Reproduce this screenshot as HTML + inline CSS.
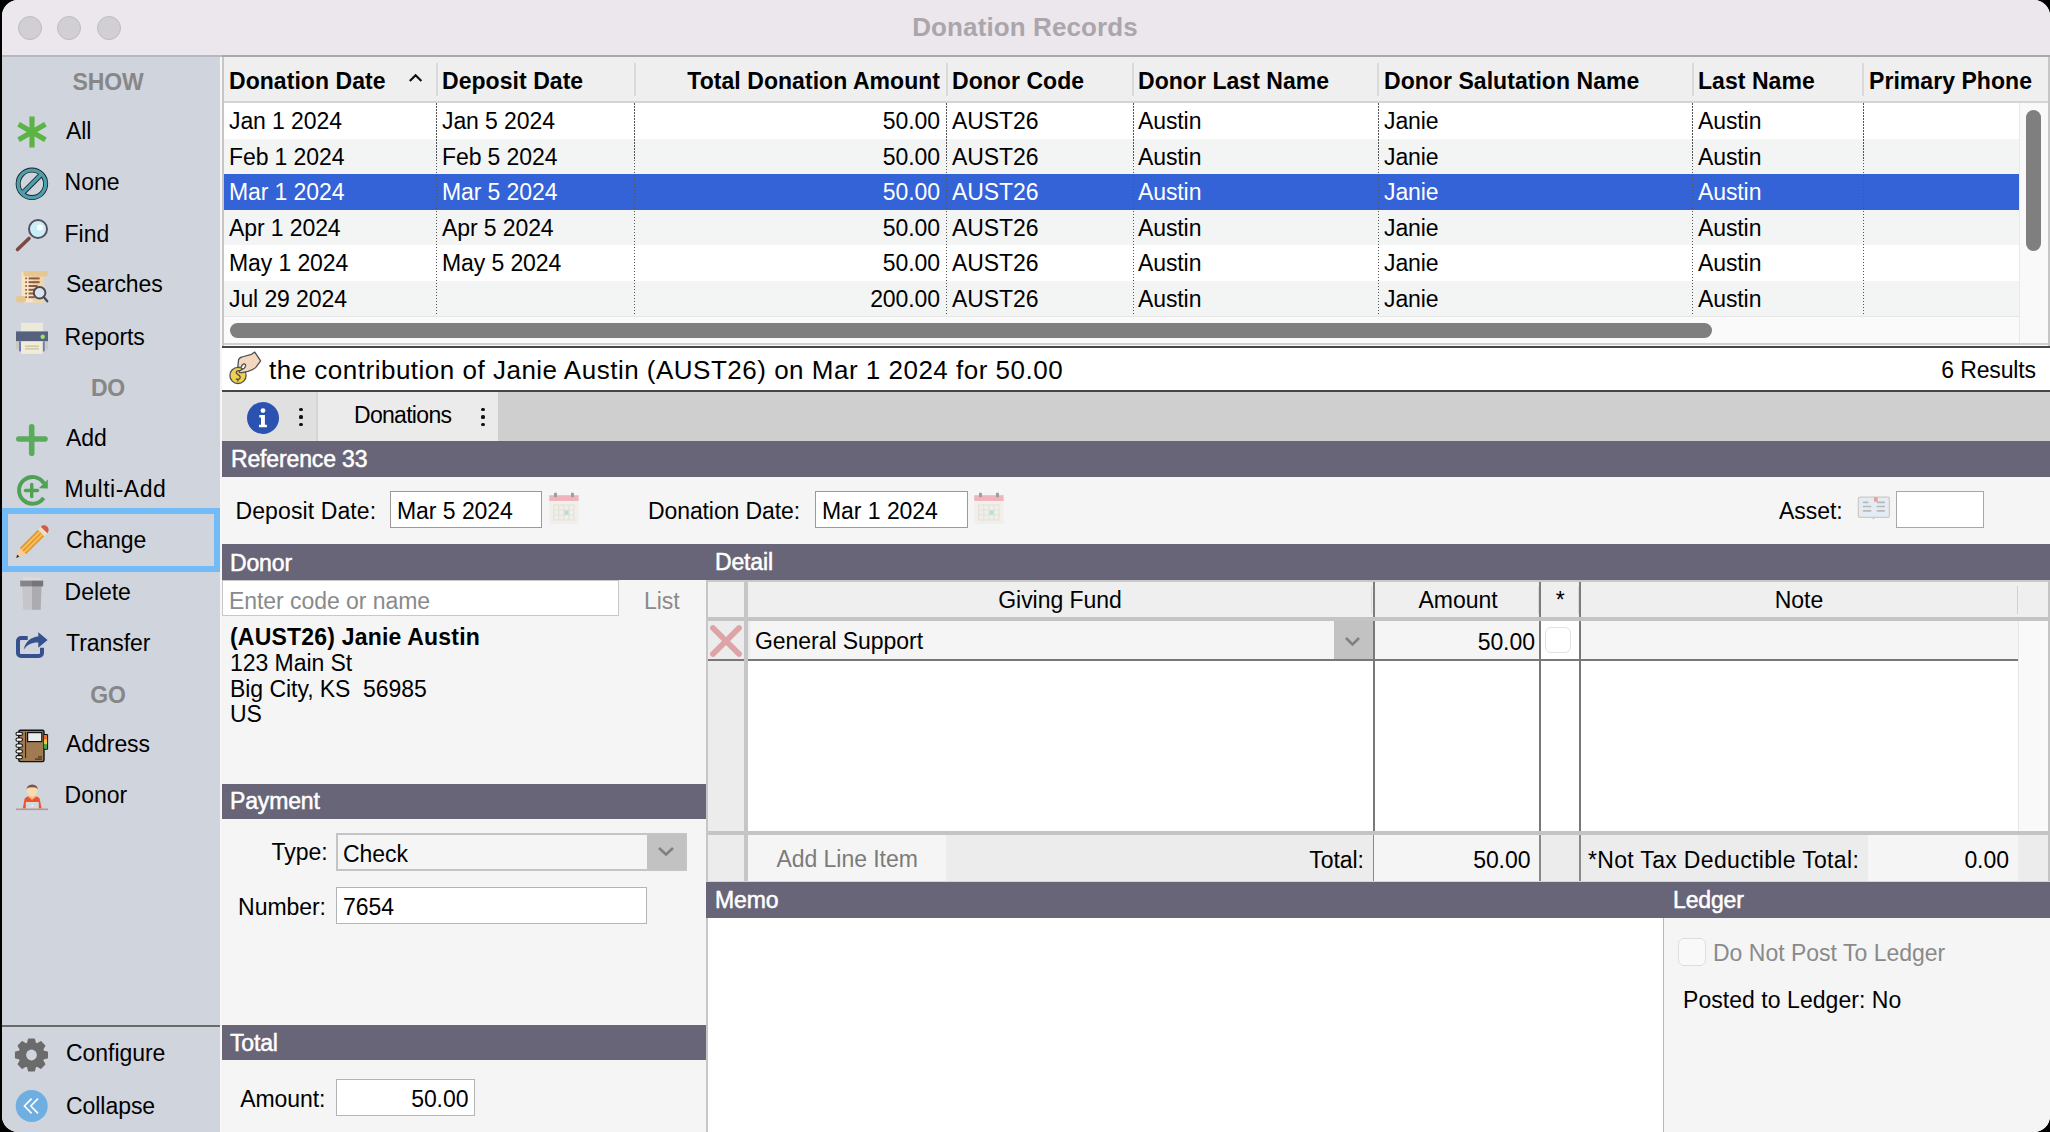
<!DOCTYPE html>
<html><head><meta charset="utf-8"><title>Donation Records</title>
<style>
html,body{margin:0;padding:0;background:#000;}
body{width:2050px;height:1132px;overflow:hidden;position:relative;font-family:"Liberation Sans",sans-serif;}
.a{position:absolute;}
.t{white-space:nowrap;}
#win{left:2px;top:0;width:2048px;height:1132px;border-radius:16px;overflow:hidden;background:#f5f5f5;}
#inner{position:absolute;left:-2px;top:0;width:2050px;height:1132px;}
</style></head><body>
<div class="a" id="win"><div id="inner">
<div class="a" style="left:0px;top:0px;width:2050px;height:55px;background:#ece7ed;"></div>
<div class="a" style="left:0px;top:55px;width:222px;height:2px;background:#b4b8c0;"></div>
<div class="a" style="left:222px;top:55px;width:1828px;height:2px;background:#a9a9a9;"></div>
<div class="a" style="left:18px;top:16px;width:22px;height:22px;border-radius:50%;background:#d2cfd4;border:1px solid #bdbac0;"></div>
<div class="a" style="left:57px;top:16px;width:22px;height:22px;border-radius:50%;background:#d2cfd4;border:1px solid #bdbac0;"></div>
<div class="a" style="left:97px;top:16px;width:22px;height:22px;border-radius:50%;background:#d2cfd4;border:1px solid #bdbac0;"></div>
<div class="a t" style="top:13.99px;font-size:26px;line-height:26px;color:#aaa6ab;letter-spacing:0.1px;font-weight:bold;left:525px;width:1000px;text-align:center;">Donation Records</div>
<div class="a" style="left:0px;top:57px;width:220px;height:1075px;background:#d0d4dd;"></div>
<div class="a" style="left:0px;top:1025px;width:220px;height:2px;background:#6a6a6a;"></div>
<div class="a" style="left:220px;top:57px;width:2px;height:1075px;background:#f7f7f7;"></div>
<div class="a t" style="top:70.53px;font-size:23px;line-height:23px;color:#878787;letter-spacing:-0.15000000000000002px;font-weight:bold;left:-392px;width:1000px;text-align:center;">SHOW</div>
<div class="a t" style="top:377.23px;font-size:23px;line-height:23px;color:#878787;letter-spacing:-0.15000000000000002px;font-weight:bold;left:-392px;width:1000px;text-align:center;">DO</div>
<div class="a t" style="top:683.53px;font-size:23px;line-height:23px;color:#878787;letter-spacing:-0.15000000000000002px;font-weight:bold;left:-392px;width:1000px;text-align:center;">GO</div>
<div class="a t" style="top:119.93px;font-size:23px;line-height:23px;color:#000;letter-spacing:-0.04999999999999999px;left:66px;">All</div>
<div class="a t" style="top:171.03px;font-size:23px;line-height:23px;color:#000;letter-spacing:-0.04999999999999999px;left:64.6px;">None</div>
<div class="a t" style="top:222.53px;font-size:23px;line-height:23px;color:#000;letter-spacing:-0.04999999999999999px;left:64.6px;">Find</div>
<div class="a t" style="top:273.33px;font-size:23px;line-height:23px;color:#000;letter-spacing:-0.04999999999999999px;left:66px;">Searches</div>
<div class="a t" style="top:325.53px;font-size:23px;line-height:23px;color:#000;letter-spacing:-0.04999999999999999px;left:64.6px;">Reports</div>
<div class="a t" style="top:426.73px;font-size:23px;line-height:23px;color:#000;letter-spacing:-0.04999999999999999px;left:66px;">Add</div>
<div class="a t" style="top:477.73px;font-size:23px;line-height:23px;color:#000;letter-spacing:0.49999999999999994px;left:64.6px;">Multi-Add</div>
<div class="a t" style="top:529.33px;font-size:23px;line-height:23px;color:#000;letter-spacing:-0.04999999999999999px;left:66px;">Change</div>
<div class="a t" style="top:581.03px;font-size:23px;line-height:23px;color:#000;letter-spacing:-0.04999999999999999px;left:64.6px;">Delete</div>
<div class="a t" style="top:631.83px;font-size:23px;line-height:23px;color:#000;letter-spacing:-0.04999999999999999px;left:66px;">Transfer</div>
<div class="a t" style="top:733.23px;font-size:23px;line-height:23px;color:#000;letter-spacing:-0.04999999999999999px;left:66px;">Address</div>
<div class="a t" style="top:784.03px;font-size:23px;line-height:23px;color:#000;letter-spacing:-0.04999999999999999px;left:64.6px;">Donor</div>
<div class="a t" style="top:1042.03px;font-size:23px;line-height:23px;color:#000;letter-spacing:-0.04999999999999999px;left:66px;">Configure</div>
<div class="a t" style="top:1094.83px;font-size:23px;line-height:23px;color:#000;letter-spacing:-0.04999999999999999px;left:66px;">Collapse</div>
<svg class="a" style="left:15px;top:115px" width="34" height="34" viewBox="0 0 34 34"><g stroke="#5bb443" stroke-width="5.2" stroke-linecap="butt"><path d="M17 1.5 V32.5"/><path d="M3.6 9.3 L30.4 24.7"/><path d="M3.6 24.7 L30.4 9.3"/></g></svg>
<svg class="a" style="left:15px;top:167px" width="34" height="34" viewBox="0 0 34 34"><circle cx="16.9" cy="16.85" r="13.75" fill="none" stroke="#1b2528" stroke-width="5"/><path d="M8.2 25.55 L25.6 8.15" stroke="#1b2528" stroke-width="5.2"/><circle cx="16.9" cy="16.85" r="13.75" fill="none" stroke="#4d9fae" stroke-width="3.3"/><path d="M7.9 25.85 L25.9 7.85" stroke="#4d9fae" stroke-width="3.5"/></svg>
<svg class="a" style="left:14px;top:216px" width="36" height="38" viewBox="0 0 36 38"><path d="M15 22.5 L3.5 33.5" stroke="#7b4a42" stroke-width="3.6" stroke-linecap="round"/><circle cx="24" cy="13" r="9" fill="#c8eef8" stroke="#57515f" stroke-width="2"/><circle cx="26" cy="11.5" r="3" fill="#fff"/></svg>
<svg class="a" style="left:14px;top:269px" width="36" height="36" viewBox="0 0 36 36"><rect x="7.5" y="2.5" width="22.5" height="31" rx="2" fill="#f9e4c3"/><rect x="18.7" y="2.5" width="11.3" height="31" fill="#f1d5a8"/><rect x="9.3" y="2" width="24.7" height="5.5" rx="2.7" fill="#e8c690"/><rect x="2" y="27" width="10" height="6.5" rx="3" fill="#e8c690"/><g fill="#8a5b45"><rect x="11.2" y="8.6" width="1.8" height="1.6"/><rect x="14.6" y="8.4" width="11" height="2"/><rect x="11.2" y="12.399999999999999" width="1.8" height="1.6"/><rect x="14.6" y="12.2" width="11" height="2"/><rect x="11.2" y="16.2" width="1.8" height="1.6"/><rect x="14.6" y="16" width="9" height="2"/><rect x="11.2" y="20.0" width="1.8" height="1.6"/><rect x="14.6" y="19.8" width="7" height="2"/><rect x="11.2" y="23.7" width="1.8" height="1.6"/><rect x="14.6" y="23.5" width="6" height="2"/><rect x="11.2" y="27.4" width="1.8" height="1.6"/><rect x="14.6" y="27.2" width="6" height="2"/></g><circle cx="25.6" cy="23.8" r="5.8" fill="#dde3ef" stroke="#4b4b55" stroke-width="2"/><path d="M29.6 27.8 L33.3 32.3" stroke="#4b4b55" stroke-width="2.2" stroke-linecap="round"/></svg>
<svg class="a" style="left:14px;top:320px" width="36" height="36" viewBox="0 0 36 36"><rect x="7" y="2.8" width="22" height="9" fill="#ebe9d9"/><rect x="2" y="11.4" width="32" height="10" fill="#56607f"/><circle cx="28.7" cy="16.7" r="2.2" fill="#9be36a"/><rect x="2" y="21.4" width="32" height="8" fill="#c9c9c1"/><rect x="5" y="21.4" width="2" height="10" fill="#6a7cc0"/><rect x="28.7" y="21.4" width="2" height="10" fill="#6a7cc0"/><rect x="7" y="21.4" width="21.7" height="12.5" fill="#f0ecd8"/><rect x="11" y="25.6" width="14" height="1.3" fill="#c9c0a2"/><rect x="11" y="28.2" width="14" height="1.3" fill="#c9c0a2"/></svg>
<svg class="a" style="left:14px;top:422px" width="36" height="36" viewBox="0 0 36 36"><g stroke="#5aab5c" stroke-width="5.6" stroke-linecap="round"><path d="M17.7 4.8 V31.2"/><path d="M4.8 17 H31"/></g></svg>
<svg class="a" style="left:14px;top:473px" width="36" height="36" viewBox="0 0 36 36"><path d="M29.6 24.8 A13.4 13.4 0 1 1 30 10.5" fill="none" stroke="#4fa155" stroke-width="4"/><path d="M33.8 6.5 L33.8 15.5 L24.8 15.2 Z" fill="#4fa155"/><g stroke="#4fa155" stroke-width="3.4" stroke-linecap="round"><path d="M17.7 11.5 V23.5"/><path d="M11.5 17.5 H23.5"/></g></svg>
<svg class="a" style="left:14px;top:524px" width="36" height="36" viewBox="0 0 36 36"><g transform="rotate(45 18 18)"><path d="M13.5 0.8 A4.5 4.5 0 0 1 22.5 0.8 V1.2 H13.5 Z" fill="#d5584b"/><rect x="13.5" y="1.2" width="9" height="4" fill="#eef0cf"/><rect x="13.5" y="2.4" width="9" height="0.7" fill="#d6d6b0"/><rect x="13.5" y="3.8" width="9" height="0.7" fill="#d6d6b0"/><rect x="13.5" y="5.2" width="9" height="25.8" fill="#e8973a"/><rect x="15.6" y="5.2" width="1.4" height="25.8" fill="#f4cf5a"/><rect x="19" y="5.2" width="1.4" height="25.8" fill="#f4cf5a"/><path d="M13.5 31 L18 40.5 L22.5 31 Z" fill="#f7cd9e"/><path d="M16.5 37.3 L18 40.5 L19.5 37.3 Z" fill="#333"/></g></svg>
<svg class="a" style="left:14px;top:576px" width="36" height="36" viewBox="0 0 36 36"><rect x="9" y="1.5" width="18" height="3" rx="1" fill="#dcdcdc"/><path d="M8 9.5 H27.5 L26.6 33.8 H9.3 Z" fill="#c6c5c9"/><path d="M18 9.5 H27.5 L26.6 33.8 H18 Z" fill="#acabb0"/><rect x="6.2" y="4.6" width="11.8" height="5.8" fill="#868489"/><rect x="18" y="4.6" width="11.2" height="5.8" fill="#77757c"/></svg>
<svg class="a" style="left:14px;top:630px" width="36" height="32" viewBox="0 0 36 32"><path d="M13.7 8 H7 A3 3 0 0 0 4 11 V23 A3 3 0 0 0 7 26 H25 A3 3 0 0 0 28 23 V17.8" fill="none" stroke="#34508e" stroke-width="4"/><path d="M9.7 19.8 C11 12 17 7 24.3 6.6 V2.3 L33.6 10 L24.3 17.8 V12.6 C18 12.4 13 14.8 9.7 19.8 Z" fill="#34508e"/></svg>
<svg class="a" style="left:14px;top:727px" width="36" height="36" viewBox="0 0 36 36"><rect x="4.8" y="3.2" width="25.2" height="31.4" rx="1.5" fill="#a07a50" stroke="#111" stroke-width="1.4"/><rect x="30" y="8" width="3.4" height="4.6" fill="#e96b2d"/><rect x="30" y="12.6" width="3.4" height="4.6" fill="#f2c53a"/><rect x="30" y="17.2" width="3.4" height="4.6" fill="#3ea34b"/><path d="M30 7.5 H33.6 V22.3 H30" fill="none" stroke="#111" stroke-width="1"/><rect x="13.6" y="5.6" width="14.2" height="9" fill="#e9ecef" stroke="#111" stroke-width="1.2"/><path d="M11.6 5 V31" stroke="#2a1f15" stroke-width="1"/><g fill="#fff" stroke="#111" stroke-width="1.1"><rect x="2" y="5.2" width="6.4" height="3.2" rx="1.5"/><rect x="2" y="11" width="6.4" height="3.2" rx="1.5"/><rect x="2" y="17" width="6.4" height="3.2" rx="1.5"/><rect x="2" y="22.8" width="6.4" height="3.2" rx="1.5"/><rect x="2" y="28.6" width="6.4" height="3.2" rx="1.5"/></g><rect x="24" y="29.5" width="4" height="1" fill="#222"/><rect x="21" y="31.6" width="7" height="1" fill="#222"/></svg>
<svg class="a" style="left:14px;top:782px" width="36" height="32" viewBox="0 0 36 32"><path d="M8.8 26.5 L10.5 17 Q11.5 14.8 14 14.6 H22.3 Q24.8 14.8 25.8 17 L27.5 26.5 Z" fill="#ef5429"/><path d="M14.5 14.6 L18 18 L21.8 14.6 Z" fill="#f4bf86"/><rect x="15" y="10" width="6.4" height="5.4" fill="#f4c48f"/><ellipse cx="18.2" cy="8.8" rx="5.2" ry="5.6" fill="#f8dcae"/><path d="M12.6 7.8 Q12.6 2.6 18.2 2.4 Q23.8 2.6 23.8 7.8 Q23 5.6 20.8 5.5 Q17 5 14 5.8 Q13 6.5 12.6 7.8 Z" fill="#7e5446"/><rect x="11.8" y="20" width="13" height="7" fill="#d6d8de"/><rect x="17.6" y="22.8" width="1.6" height="1.4" fill="#fff"/><rect x="2" y="26.5" width="32" height="1.6" fill="#b99594"/></svg>
<svg class="a" style="left:14px;top:1038px" width="34" height="34" viewBox="0 0 34 34"><path d="M29.08 13.16 L33.27 14.29 L33.27 19.71 L29.08 20.84 L28.40 22.48 L30.56 26.24 L26.74 30.06 L22.98 27.90 L21.34 28.58 L20.21 32.77 L14.79 32.77 L13.66 28.58 L12.02 27.90 L8.26 30.06 L4.44 26.24 L6.60 22.48 L5.92 20.84 L1.73 19.71 L1.73 14.29 L5.92 13.16 L6.60 11.52 L4.44 7.76 L8.26 3.94 L12.02 6.10 L13.66 5.42 L14.79 1.23 L20.21 1.23 L21.34 5.42 L22.98 6.10 L26.74 3.94 L30.56 7.76 L28.40 11.52 Z" fill="#6b6b6b" stroke="#6b6b6b" stroke-width="1.6" stroke-linejoin="round"/><circle cx="17.5" cy="17" r="12.8" fill="#6b6b6b"/><circle cx="17.5" cy="17" r="5.4" fill="#d0d4dd"/></svg>
<svg class="a" style="left:14px;top:1088px" width="36" height="36" viewBox="0 0 36 36"><circle cx="17.7" cy="18" r="16" fill="#6faee0"/><g stroke="#fff" stroke-width="1.6" fill="none"><path d="M17.6 10.6 L10.4 18 L17.6 25.4"/><path d="M24 10.6 L16.8 18 L24 25.4"/></g></svg>
<div class="a" style="left:2px;top:508px;width:206px;height:52px;border:6px solid #72bbf6;"></div>
<div class="a" style="left:222px;top:57px;width:1828px;height:289px;background:#fafafa;"></div>
<div class="a" style="left:222px;top:57px;width:2px;height:289px;background:#c6c6c6;"></div>
<div class="a" style="left:2048px;top:57px;width:2px;height:289px;background:#c6c6c6;"></div>
<div class="a" style="left:224px;top:57px;width:1824px;height:44px;background:#efefef;"></div>
<div class="a" style="left:224px;top:101px;width:1824px;height:2px;background:#d4d4d4;"></div>
<div class="a" style="left:224px;top:103px;width:1795px;height:35.5px;background:#ffffff;"></div>
<div class="a" style="left:224px;top:138.5px;width:1795px;height:35.5px;background:#f3f4f4;"></div>
<div class="a" style="left:224px;top:174px;width:1795px;height:35.5px;background:#3462d7;"></div>
<div class="a" style="left:224px;top:209.5px;width:1795px;height:35.5px;background:#f3f4f4;"></div>
<div class="a" style="left:224px;top:245px;width:1795px;height:35.5px;background:#ffffff;"></div>
<div class="a" style="left:224px;top:280.5px;width:1795px;height:35.5px;background:#f3f4f4;"></div>
<div class="a" style="left:2019px;top:103px;width:29px;height:241px;background:#f9f9f9;"></div>
<div class="a" style="left:2019px;top:103px;width:1px;height:241px;background:#e9e9e9;"></div>
<div class="a" style="left:2026px;top:110px;width:15px;height:141px;border-radius:8px;background:#7f7f7f;"></div>
<div class="a" style="left:224px;top:316px;width:1795px;height:28px;background:#fafafa;"></div>
<div class="a" style="left:224px;top:316px;width:1795px;height:1px;background:#e6e6e6;"></div>
<div class="a" style="left:230px;top:323px;width:1482px;height:15px;border-radius:8px;background:#7f7f7f;"></div>
<div class="a" style="left:224px;top:343px;width:1824px;height:2px;background:#d0d0d0;"></div>
<div class="a" style="left:435.5px;top:63px;width:2.0px;height:33px;background:#dadada;"></div>
<div class="a" style="left:436.0px;top:103px;width:1px;height:213px;background:repeating-linear-gradient(to bottom,#555 0 1.5px,transparent 1.5px 3px);"></div>
<div class="a" style="left:633.5px;top:63px;width:2.0px;height:33px;background:#dadada;"></div>
<div class="a" style="left:634.0px;top:103px;width:1px;height:213px;background:repeating-linear-gradient(to bottom,#555 0 1.5px,transparent 1.5px 3px);"></div>
<div class="a" style="left:945.5px;top:63px;width:2.0px;height:33px;background:#dadada;"></div>
<div class="a" style="left:946.0px;top:103px;width:1px;height:213px;background:repeating-linear-gradient(to bottom,#555 0 1.5px,transparent 1.5px 3px);"></div>
<div class="a" style="left:1132px;top:63px;width:2px;height:33px;background:#dadada;"></div>
<div class="a" style="left:1132.5px;top:103px;width:1px;height:213px;background:repeating-linear-gradient(to bottom,#555 0 1.5px,transparent 1.5px 3px);"></div>
<div class="a" style="left:1377px;top:63px;width:2px;height:33px;background:#dadada;"></div>
<div class="a" style="left:1377.5px;top:103px;width:1px;height:213px;background:repeating-linear-gradient(to bottom,#555 0 1.5px,transparent 1.5px 3px);"></div>
<div class="a" style="left:1691.5px;top:63px;width:2.0px;height:33px;background:#dadada;"></div>
<div class="a" style="left:1692.0px;top:103px;width:1px;height:213px;background:repeating-linear-gradient(to bottom,#555 0 1.5px,transparent 1.5px 3px);"></div>
<div class="a" style="left:1862px;top:63px;width:2px;height:33px;background:#dadada;"></div>
<div class="a" style="left:1862.5px;top:103px;width:1px;height:213px;background:repeating-linear-gradient(to bottom,#555 0 1.5px,transparent 1.5px 3px);"></div>
<div class="a t" style="top:69.83px;font-size:23px;line-height:23px;color:#000;letter-spacing:0.04999999999999999px;font-weight:bold;left:229px;">Donation Date</div>
<div class="a t" style="top:69.83px;font-size:23px;line-height:23px;color:#000;letter-spacing:0.04999999999999999px;font-weight:bold;left:442px;">Deposit Date</div>
<div class="a t" style="top:69.83px;font-size:23px;line-height:23px;color:#000;letter-spacing:0.04999999999999999px;font-weight:bold;right:1109.95px;">Total Donation Amount</div>
<div class="a t" style="top:69.83px;font-size:23px;line-height:23px;color:#000;letter-spacing:0.04999999999999999px;font-weight:bold;left:952px;">Donor Code</div>
<div class="a t" style="top:69.83px;font-size:23px;line-height:23px;color:#000;letter-spacing:0.04999999999999999px;font-weight:bold;left:1138px;">Donor Last Name</div>
<div class="a t" style="top:69.83px;font-size:23px;line-height:23px;color:#000;letter-spacing:0.04999999999999999px;font-weight:bold;left:1384px;">Donor Salutation Name</div>
<div class="a t" style="top:69.83px;font-size:23px;line-height:23px;color:#000;letter-spacing:0.04999999999999999px;font-weight:bold;left:1698px;">Last Name</div>
<div class="a t" style="top:69.83px;font-size:23px;line-height:23px;color:#000;letter-spacing:0.04999999999999999px;font-weight:bold;left:1869px;">Primary Phone</div>
<svg class="a" style="left:408px;top:72px" width="16" height="12" viewBox="0 0 16 12"><path d="M1.8 9 L7.6 3.2 L13.4 9" stroke="#111" stroke-width="2.2" fill="none"/></svg>
<div class="a t" style="top:110.13px;font-size:23px;line-height:23px;color:#000;letter-spacing:-0.10000000000000003px;left:229px;">Jan 1 2024</div>
<div class="a t" style="top:110.13px;font-size:23px;line-height:23px;color:#000;letter-spacing:-0.10000000000000003px;left:442px;">Jan 5 2024</div>
<div class="a t" style="top:110.13px;font-size:23px;line-height:23px;color:#000;letter-spacing:-0.10000000000000003px;right:1110.10px;">50.00</div>
<div class="a t" style="top:110.13px;font-size:23px;line-height:23px;color:#000;letter-spacing:-0.10000000000000003px;left:952px;">AUST26</div>
<div class="a t" style="top:110.13px;font-size:23px;line-height:23px;color:#000;letter-spacing:-0.10000000000000003px;left:1138px;">Austin</div>
<div class="a t" style="top:110.13px;font-size:23px;line-height:23px;color:#000;letter-spacing:-0.10000000000000003px;left:1384px;">Janie</div>
<div class="a t" style="top:110.13px;font-size:23px;line-height:23px;color:#000;letter-spacing:-0.10000000000000003px;left:1698px;">Austin</div>
<div class="a t" style="top:145.63px;font-size:23px;line-height:23px;color:#000;letter-spacing:-0.10000000000000003px;left:229px;">Feb 1 2024</div>
<div class="a t" style="top:145.63px;font-size:23px;line-height:23px;color:#000;letter-spacing:-0.10000000000000003px;left:442px;">Feb 5 2024</div>
<div class="a t" style="top:145.63px;font-size:23px;line-height:23px;color:#000;letter-spacing:-0.10000000000000003px;right:1110.10px;">50.00</div>
<div class="a t" style="top:145.63px;font-size:23px;line-height:23px;color:#000;letter-spacing:-0.10000000000000003px;left:952px;">AUST26</div>
<div class="a t" style="top:145.63px;font-size:23px;line-height:23px;color:#000;letter-spacing:-0.10000000000000003px;left:1138px;">Austin</div>
<div class="a t" style="top:145.63px;font-size:23px;line-height:23px;color:#000;letter-spacing:-0.10000000000000003px;left:1384px;">Janie</div>
<div class="a t" style="top:145.63px;font-size:23px;line-height:23px;color:#000;letter-spacing:-0.10000000000000003px;left:1698px;">Austin</div>
<div class="a t" style="top:181.13px;font-size:23px;line-height:23px;color:#fff;letter-spacing:-0.10000000000000003px;left:229px;">Mar 1 2024</div>
<div class="a t" style="top:181.13px;font-size:23px;line-height:23px;color:#fff;letter-spacing:-0.10000000000000003px;left:442px;">Mar 5 2024</div>
<div class="a t" style="top:181.13px;font-size:23px;line-height:23px;color:#fff;letter-spacing:-0.10000000000000003px;right:1110.10px;">50.00</div>
<div class="a t" style="top:181.13px;font-size:23px;line-height:23px;color:#fff;letter-spacing:-0.10000000000000003px;left:952px;">AUST26</div>
<div class="a t" style="top:181.13px;font-size:23px;line-height:23px;color:#fff;letter-spacing:-0.10000000000000003px;left:1138px;">Austin</div>
<div class="a t" style="top:181.13px;font-size:23px;line-height:23px;color:#fff;letter-spacing:-0.10000000000000003px;left:1384px;">Janie</div>
<div class="a t" style="top:181.13px;font-size:23px;line-height:23px;color:#fff;letter-spacing:-0.10000000000000003px;left:1698px;">Austin</div>
<div class="a t" style="top:216.63px;font-size:23px;line-height:23px;color:#000;letter-spacing:-0.10000000000000003px;left:229px;">Apr 1 2024</div>
<div class="a t" style="top:216.63px;font-size:23px;line-height:23px;color:#000;letter-spacing:-0.10000000000000003px;left:442px;">Apr 5 2024</div>
<div class="a t" style="top:216.63px;font-size:23px;line-height:23px;color:#000;letter-spacing:-0.10000000000000003px;right:1110.10px;">50.00</div>
<div class="a t" style="top:216.63px;font-size:23px;line-height:23px;color:#000;letter-spacing:-0.10000000000000003px;left:952px;">AUST26</div>
<div class="a t" style="top:216.63px;font-size:23px;line-height:23px;color:#000;letter-spacing:-0.10000000000000003px;left:1138px;">Austin</div>
<div class="a t" style="top:216.63px;font-size:23px;line-height:23px;color:#000;letter-spacing:-0.10000000000000003px;left:1384px;">Janie</div>
<div class="a t" style="top:216.63px;font-size:23px;line-height:23px;color:#000;letter-spacing:-0.10000000000000003px;left:1698px;">Austin</div>
<div class="a t" style="top:252.13px;font-size:23px;line-height:23px;color:#000;letter-spacing:-0.10000000000000003px;left:229px;">May 1 2024</div>
<div class="a t" style="top:252.13px;font-size:23px;line-height:23px;color:#000;letter-spacing:-0.10000000000000003px;left:442px;">May 5 2024</div>
<div class="a t" style="top:252.13px;font-size:23px;line-height:23px;color:#000;letter-spacing:-0.10000000000000003px;right:1110.10px;">50.00</div>
<div class="a t" style="top:252.13px;font-size:23px;line-height:23px;color:#000;letter-spacing:-0.10000000000000003px;left:952px;">AUST26</div>
<div class="a t" style="top:252.13px;font-size:23px;line-height:23px;color:#000;letter-spacing:-0.10000000000000003px;left:1138px;">Austin</div>
<div class="a t" style="top:252.13px;font-size:23px;line-height:23px;color:#000;letter-spacing:-0.10000000000000003px;left:1384px;">Janie</div>
<div class="a t" style="top:252.13px;font-size:23px;line-height:23px;color:#000;letter-spacing:-0.10000000000000003px;left:1698px;">Austin</div>
<div class="a t" style="top:287.63px;font-size:23px;line-height:23px;color:#000;letter-spacing:-0.10000000000000003px;left:229px;">Jul 29 2024</div>
<div class="a t" style="top:287.63px;font-size:23px;line-height:23px;color:#000;letter-spacing:-0.10000000000000003px;left:442px;"></div>
<div class="a t" style="top:287.63px;font-size:23px;line-height:23px;color:#000;letter-spacing:-0.10000000000000003px;right:1110.10px;">200.00</div>
<div class="a t" style="top:287.63px;font-size:23px;line-height:23px;color:#000;letter-spacing:-0.10000000000000003px;left:952px;">AUST26</div>
<div class="a t" style="top:287.63px;font-size:23px;line-height:23px;color:#000;letter-spacing:-0.10000000000000003px;left:1138px;">Austin</div>
<div class="a t" style="top:287.63px;font-size:23px;line-height:23px;color:#000;letter-spacing:-0.10000000000000003px;left:1384px;">Janie</div>
<div class="a t" style="top:287.63px;font-size:23px;line-height:23px;color:#000;letter-spacing:-0.10000000000000003px;left:1698px;">Austin</div>
<div class="a" style="left:222px;top:346px;width:1828px;height:2px;background:#454545;"></div>
<div class="a" style="left:222px;top:348px;width:1828px;height:42px;background:#ffffff;"></div>
<div class="a" style="left:222px;top:390px;width:1828px;height:2px;background:#454545;"></div>
<div class="a t" style="top:356.69px;font-size:26px;line-height:26px;color:#000;letter-spacing:0.5px;left:269px;">the contribution of Janie Austin (AUST26) on Mar 1 2024 for 50.00</div>
<div class="a t" style="top:359.23px;font-size:23px;line-height:23px;color:#000;letter-spacing:-0.15000000000000002px;right:14.15px;">6 Results</div>
<div class="a" style="left:222px;top:392px;width:1828px;height:49px;background:#cfcfcf;"></div>
<div class="a" style="left:222px;top:392px;width:94px;height:49px;background:#e0e0e0;"></div>
<div class="a" style="left:316px;top:392px;width:2px;height:49px;background:#d5d5d5;"></div>
<div class="a" style="left:318px;top:392px;width:180px;height:49px;background:#ebebeb;"></div>
<div class="a" style="left:247px;top:402px;width:32px;height:32px;border-radius:50%;background:#2b52b1;"></div>
<svg class="a" style="left:247px;top:402px" width="32" height="32" viewBox="0 0 32 32"><circle cx="16" cy="8.6" r="2.4" fill="#fff"/><path d="M12.3 13 H17.9 V22.8 H19.9 V25.3 H12 V22.8 H14 V15.4 H12.3 Z" fill="#fff"/></svg>
<div class="a" style="left:299.4px;top:408.09999999999997px;width:3.2px;height:3.2px;border-radius:50%;background:#111;"></div>
<div class="a" style="left:299.4px;top:415.4px;width:3.2px;height:3.2px;border-radius:50%;background:#111;"></div>
<div class="a" style="left:299.4px;top:422.79999999999995px;width:3.2px;height:3.2px;border-radius:50%;background:#111;"></div>
<div class="a" style="left:481.4px;top:408.09999999999997px;width:3.2px;height:3.2px;border-radius:50%;background:#111;"></div>
<div class="a" style="left:481.4px;top:415.4px;width:3.2px;height:3.2px;border-radius:50%;background:#111;"></div>
<div class="a" style="left:481.4px;top:422.79999999999995px;width:3.2px;height:3.2px;border-radius:50%;background:#111;"></div>
<div class="a t" style="top:403.53px;font-size:23px;line-height:23px;color:#000;letter-spacing:-0.7px;left:354px;">Donations</div>
<div class="a" style="left:222px;top:441px;width:1828px;height:36px;background:#686579;"></div>
<div class="a t" style="top:447.73px;font-size:23px;line-height:23px;color:#fff;letter-spacing:-0.15000000000000002px;left:231px;-webkit-text-stroke:0.5px #fff;">Reference 33</div>
<div class="a t" style="top:500.13px;font-size:23px;line-height:23px;color:#000;letter-spacing:0.10000000000000003px;left:235.5px;">Deposit Date:</div>
<div class="a" style="left:390px;top:491px;width:152px;height:37px;background:#fff;box-sizing:border-box;border:1px solid #9a9a9a;"></div>
<div class="a t" style="top:500.13px;font-size:23px;line-height:23px;color:#000;letter-spacing:-0.04999999999999999px;left:397px;">Mar 5 2024</div>
<div class="a t" style="top:500.13px;font-size:23px;line-height:23px;color:#000;letter-spacing:-0.10000000000000003px;left:648px;">Donation Date:</div>
<div class="a" style="left:815px;top:491px;width:153px;height:37px;background:#fff;box-sizing:border-box;border:1px solid #9a9a9a;"></div>
<div class="a t" style="top:500.13px;font-size:23px;line-height:23px;color:#000;letter-spacing:-0.04999999999999999px;left:822px;">Mar 1 2024</div>
<div class="a t" style="top:500.13px;font-size:23px;line-height:23px;color:#000;letter-spacing:-0.04999999999999999px;left:1779px;">Asset:</div>
<div class="a" style="left:1896px;top:491px;width:88px;height:37px;background:#fff;box-sizing:border-box;border:1px solid #a8a8a8;"></div>
<div class="a" style="left:222px;top:544px;width:1828px;height:36px;background:#686579;"></div>
<div class="a t" style="top:551.53px;font-size:23px;line-height:23px;color:#fff;letter-spacing:-0.15000000000000002px;left:230px;-webkit-text-stroke:0.5px #fff;">Donor</div>
<div class="a t" style="top:551.23px;font-size:23px;line-height:23px;color:#fff;letter-spacing:-0.15000000000000002px;left:715px;-webkit-text-stroke:0.5px #fff;">Detail</div>
<div class="a" style="left:706px;top:580px;width:2px;height:552px;background:#c6c6c6;"></div>
<div class="a" style="left:222px;top:580px;width:397px;height:36px;background:#fff;box-sizing:border-box;border:1px solid #c8c8c8;"></div>
<div class="a t" style="top:589.53px;font-size:23px;line-height:23px;color:#8a8a8a;letter-spacing:-0.04999999999999999px;left:229px;">Enter code or name</div>
<div class="a t" style="top:589.53px;font-size:23px;line-height:23px;color:#8a8a8a;letter-spacing:-0.04999999999999999px;left:644px;">List</div>
<div class="a t" style="top:626.33px;font-size:23px;line-height:23px;color:#000;letter-spacing:0.2px;font-weight:bold;left:230px;">(AUST26) Janie Austin</div>
<div class="a t" style="top:652.13px;font-size:23px;line-height:23px;color:#000;letter-spacing:-0.04999999999999999px;left:230px;">123 Main St</div>
<div class="a t" style="top:677.53px;font-size:23px;line-height:23px;color:#000;letter-spacing:-0.04999999999999999px;left:230px;">Big City, KS&nbsp; 56985</div>
<div class="a t" style="top:702.93px;font-size:23px;line-height:23px;color:#000;letter-spacing:-0.04999999999999999px;left:230px;">US</div>
<div class="a" style="left:222px;top:784px;width:484px;height:35px;background:#686579;"></div>
<div class="a t" style="top:790.33px;font-size:23px;line-height:23px;color:#fff;letter-spacing:-0.15000000000000002px;left:230px;-webkit-text-stroke:0.5px #fff;">Payment</div>
<div class="a t" style="top:841.33px;font-size:23px;line-height:23px;color:#000;letter-spacing:-0.04999999999999999px;right:1722.45px;">Type:</div>
<div class="a" style="left:336px;top:833px;width:351px;height:38px;background:#f5f5f5;box-sizing:border-box;border:2px solid #c4c4c4;"></div>
<div class="a" style="left:647px;top:835px;width:38px;height:34px;background:#c2c2c2;"></div>
<div class="a t" style="top:842.53px;font-size:23px;line-height:23px;color:#000;letter-spacing:-0.04999999999999999px;left:343px;">Check</div>
<div class="a t" style="top:896.03px;font-size:23px;line-height:23px;color:#000;letter-spacing:-0.04999999999999999px;right:1724.05px;">Number:</div>
<div class="a" style="left:336px;top:887px;width:311px;height:37px;background:#fff;box-sizing:border-box;border:1px solid #b4b4b4;"></div>
<div class="a t" style="top:896.03px;font-size:23px;line-height:23px;color:#000;letter-spacing:-0.04999999999999999px;left:343px;">7654</div>
<div class="a" style="left:222px;top:1025px;width:484px;height:35px;background:#686579;"></div>
<div class="a t" style="top:1031.83px;font-size:23px;line-height:23px;color:#fff;letter-spacing:-0.15000000000000002px;left:230px;-webkit-text-stroke:0.5px #fff;">Total</div>
<div class="a t" style="top:1088.03px;font-size:23px;line-height:23px;color:#000;letter-spacing:-0.04999999999999999px;right:1724.55px;">Amount:</div>
<div class="a" style="left:336px;top:1079px;width:139px;height:37px;background:#fff;box-sizing:border-box;border:1px solid #b4b4b4;"></div>
<div class="a t" style="top:1088.03px;font-size:23px;line-height:23px;color:#000;letter-spacing:-0.04999999999999999px;right:1581.55px;">50.00</div>
<div class="a" style="left:708px;top:580px;width:1342px;height:301px;background:#ececec;"></div>
<div class="a" style="left:708px;top:580px;width:1340px;height:2px;background:#c8c8c8;"></div>
<div class="a" style="left:2048px;top:580px;width:2px;height:301px;background:#c4c4c4;"></div>
<div class="a" style="left:708px;top:582px;width:1340px;height:35px;background:#efefef;"></div>
<div class="a" style="left:708px;top:617px;width:1340px;height:4px;background:#c4c4c4;"></div>
<div class="a" style="left:749.5px;top:621px;width:584.5px;height:38px;background:#f5f5f5;"></div>
<div class="a" style="left:1334px;top:621px;width:38.5px;height:38px;background:#c2c2c2;"></div>
<div class="a" style="left:1374.5px;top:621px;width:164.5px;height:38px;background:#f5f5f5;"></div>
<div class="a" style="left:1541px;top:621px;width:38px;height:38px;background:#ffffff;"></div>
<div class="a" style="left:1581px;top:621px;width:437px;height:38px;background:#f5f5f5;"></div>
<div class="a" style="left:708px;top:659px;width:1310px;height:2px;background:#787878;"></div>
<div class="a" style="left:748px;top:661px;width:1270px;height:170px;background:#ffffff;"></div>
<div class="a" style="left:2018px;top:621px;width:30px;height:210px;background:#f9f9f9;"></div>
<div class="a" style="left:2018px;top:621px;width:1px;height:210px;background:#e6e6e6;"></div>
<div class="a" style="left:708px;top:831px;width:1340px;height:4px;background:#c4c4c4;"></div>
<div class="a" style="left:744px;top:582px;width:4px;height:299px;background:#c6c6c6;"></div>
<div class="a" style="left:1372.5px;top:621px;width:2.0px;height:210px;background:#787878;"></div>
<div class="a" style="left:1372.5px;top:835px;width:2.0px;height:46px;background:#8a8a8a;"></div>
<div class="a" style="left:1372.5px;top:582px;width:2.0px;height:35px;background:#7c7c7c;"></div>
<div class="a" style="left:1371.0px;top:586px;width:1.0px;height:28px;background:#dadada;"></div>
<div class="a" style="left:1539px;top:621px;width:2px;height:210px;background:#787878;"></div>
<div class="a" style="left:1539px;top:835px;width:2px;height:46px;background:#8a8a8a;"></div>
<div class="a" style="left:1539px;top:582px;width:2px;height:35px;background:#7c7c7c;"></div>
<div class="a" style="left:1537.5px;top:586px;width:1.0px;height:28px;background:#dadada;"></div>
<div class="a" style="left:1579px;top:621px;width:2px;height:210px;background:#787878;"></div>
<div class="a" style="left:1579px;top:835px;width:2px;height:46px;background:#8a8a8a;"></div>
<div class="a" style="left:1579px;top:582px;width:2px;height:35px;background:#7c7c7c;"></div>
<div class="a" style="left:1577.5px;top:586px;width:1.0px;height:28px;background:#dadada;"></div>
<div class="a" style="left:2017px;top:586px;width:1px;height:28px;background:#d0d0d0;"></div>
<div class="a t" style="top:589.33px;font-size:23px;line-height:23px;color:#000;letter-spacing:-0.04999999999999999px;left:560px;width:1000px;text-align:center;">Giving Fund</div>
<div class="a t" style="top:589.33px;font-size:23px;line-height:23px;color:#000;letter-spacing:-0.04999999999999999px;left:958px;width:1000px;text-align:center;">Amount</div>
<div class="a t" style="top:589.33px;font-size:23px;line-height:23px;color:#000;letter-spacing:-0.45px;left:1060px;width:1000px;text-align:center;">*</div>
<div class="a t" style="top:589.33px;font-size:23px;line-height:23px;color:#000;letter-spacing:-0.04999999999999999px;left:1299px;width:1000px;text-align:center;">Note</div>
<svg class="a" style="left:709px;top:624px" width="34" height="34" viewBox="0 0 34 34"><path d="M4 4 L30 30 M30 4 L4 30" stroke="#dea3a6" stroke-width="5.8" stroke-linecap="round"/></svg>
<div class="a t" style="top:630.33px;font-size:23px;line-height:23px;color:#000;letter-spacing:-0.04999999999999999px;left:755px;">General Support</div>
<svg class="a" style="left:1344px;top:636px" width="17" height="11" viewBox="0 0 17 11"><path d="M2 2 L8.5 8.5 L15 2" stroke="#808080" stroke-width="2.6" fill="none"/></svg>
<div class="a t" style="top:630.53px;font-size:23px;line-height:23px;color:#000;letter-spacing:-0.04999999999999999px;right:515.05px;">50.00</div>
<div class="a" style="left:1545px;top:627px;width:26px;height:26px;box-sizing:border-box;border-radius:6px;background:#fff;border:1px solid #e3e3e3;"></div>
<div class="a" style="left:748px;top:835px;width:198px;height:46px;background:#f5f5f5;"></div>
<div class="a" style="left:1374px;top:835px;width:165px;height:46px;background:#f5f5f5;"></div>
<div class="a" style="left:1868px;top:835px;width:150px;height:46px;background:#f5f5f5;"></div>
<div class="a t" style="top:848.23px;font-size:23px;line-height:23px;color:#7b7b7b;letter-spacing:-0.04999999999999999px;left:776.5px;">Add Line Item</div>
<div class="a t" style="top:848.53px;font-size:23px;line-height:23px;color:#000;letter-spacing:-0.04999999999999999px;right:686.05px;">Total:</div>
<div class="a t" style="top:848.53px;font-size:23px;line-height:23px;color:#000;letter-spacing:-0.04999999999999999px;right:519.55px;">50.00</div>
<div class="a t" style="top:848.53px;font-size:23px;line-height:23px;color:#000;letter-spacing:0.33px;left:1588px;">*Not Tax Deductible Total:</div>
<div class="a t" style="top:848.53px;font-size:23px;line-height:23px;color:#000;letter-spacing:-0.04999999999999999px;right:41.05px;">0.00</div>
<div class="a" style="left:706px;top:881px;width:1344px;height:1px;background:#d6d6d6;"></div>
<div class="a" style="left:706px;top:882px;width:1344px;height:36px;background:#686579;"></div>
<div class="a t" style="top:889.03px;font-size:23px;line-height:23px;color:#fff;letter-spacing:-0.15000000000000002px;left:715px;-webkit-text-stroke:0.5px #fff;">Memo</div>
<div class="a t" style="top:889.03px;font-size:23px;line-height:23px;color:#fff;letter-spacing:-0.15000000000000002px;left:1673px;-webkit-text-stroke:0.5px #fff;">Ledger</div>
<div class="a" style="left:708px;top:918px;width:955px;height:214px;background:#ffffff;"></div>
<div class="a" style="left:1663px;top:918px;width:1px;height:214px;background:#b8b8b8;"></div>
<div class="a" style="left:1664px;top:918px;width:386px;height:214px;background:#f5f5f5;"></div>
<div class="a" style="left:1678px;top:938px;width:28px;height:28px;box-sizing:border-box;border-radius:6px;background:#f9f9f9;border:1px solid #dedede;"></div>
<div class="a t" style="top:941.53px;font-size:23px;line-height:23px;color:#8a8a8a;letter-spacing:0.0px;left:1713px;">Do Not Post To Ledger</div>
<div class="a t" style="top:988.53px;font-size:23px;line-height:23px;color:#000;letter-spacing:0.04999999999999999px;left:1683px;">Posted to Ledger: No</div>
<svg class="a" style="left:225px;top:348px" width="45" height="42" viewBox="0 0 45 42"><circle cx="13" cy="27.4" r="8.1" fill="#f3cf4a" stroke="#4d5157" stroke-width="1.3"/><path d="M15.4 23.4 Q13.2 21.9 11.6 23.4 Q10.6 25.4 13 26.6 Q15.6 27.8 15.1 30.1 Q13.6 32.2 10.9 30.8 M12.9 30.8 V33.4" fill="none" stroke="#4d5157" stroke-width="1.3"/><path d="M12.8 19.3 L13.6 11.6 Q14.6 9.6 17 9 L26.4 6.3 L29.8 4.1 L35.6 12.9 L31.4 18.6 Q29 21.7 23 23.3 L17 24.6 Q13.4 25.2 14.6 22.9 L19.2 20.2 Q21.8 17.3 19.8 16 Q17.4 15.5 16.2 19.2 Z" fill="#f4d8bd" stroke="#4d5157" stroke-width="1.3" stroke-linejoin="round"/></svg>
<svg class="a" style="left:545px;top:488px" width="38" height="38" viewBox="0 0 38 38"><rect x="4.2" y="7.2" width="29.4" height="5.8" fill="#efb5bb"/><rect x="9" y="4.8" width="2.9" height="4.4" fill="#9a9da8"/><rect x="26" y="4.8" width="2.9" height="4.4" fill="#9a9da8"/><rect x="4.2" y="13.5" width="29.4" height="22.5" fill="#f1efea"/><g fill="none" stroke="#e3e1da" stroke-width="1.2"><rect x="8.8" y="17" width="20.2" height="15"/><path d="M13.8 17 V32 M18.9 17 V32 M23.9 17 V32 M8.8 22 H29 M8.8 27 H29"/></g><rect x="19.5" y="22.6" width="4" height="4" fill="#b3ded5"/></svg>
<svg class="a" style="left:970px;top:488px" width="38" height="38" viewBox="0 0 38 38"><rect x="4.2" y="7.2" width="29.4" height="5.8" fill="#efb5bb"/><rect x="9" y="4.8" width="2.9" height="4.4" fill="#9a9da8"/><rect x="26" y="4.8" width="2.9" height="4.4" fill="#9a9da8"/><rect x="4.2" y="13.5" width="29.4" height="22.5" fill="#f1efea"/><g fill="none" stroke="#e3e1da" stroke-width="1.2"><rect x="8.8" y="17" width="20.2" height="15"/><path d="M13.8 17 V32 M18.9 17 V32 M23.9 17 V32 M8.8 22 H29 M8.8 27 H29"/></g><rect x="19.5" y="22.6" width="4" height="4" fill="#b3ded5"/></svg>
<svg class="a" style="left:1850px;top:488px" width="48" height="36" viewBox="0 0 48 36"><rect x="8.4" y="9.2" width="31" height="20.2" rx="1.5" fill="#e3ebf5" stroke="#cfcac2" stroke-width="1.3"/><path d="M21.5 29.4 L23.5 31.6 L25.5 29.4 Z" fill="#cfcac2"/><path d="M24 9.2 H27.8 V13.4 L25.9 14 L24 13.4 Z" fill="#eaa095"/><g stroke="#b8b8b8" stroke-width="1.7" stroke-linecap="round"><path d="M13.6 14.3 H17.6 M13.6 18.5 H20.6 M13.6 22.8 H20.6 M27.5 14.3 H34.3 M27.5 18.5 H34.3 M27.5 22.8 H34.3"/></g></svg>
<svg class="a" style="left:656px;top:845px" width="22" height="14" viewBox="0 0 22 14"><path d="M3 3 L10 9.5 L17 3" stroke="#808080" stroke-width="2.6" fill="none"/></svg>
</div></div>
</body></html>
